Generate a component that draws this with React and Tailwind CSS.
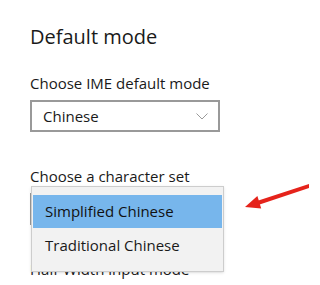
import React from 'react';

const font = { fontFamily: '"Open Sans", "Noto Sans", sans-serif' };

export default function App() {
  return (
    <div className="relative w-[309px] h-[285px] overflow-hidden bg-white text-[#1a1a1a]" style={font}>
      <div className="flex flex-col pl-[30px] pt-[24px]">
        <h2 className="text-[20px] leading-[26px] font-normal">Default mode</h2>
        <label className="mt-[23px] text-[15px] leading-[20px]">Choose IME default mode</label>
        <div className="mt-[7px] w-[190px] h-[32px] border-2 border-[#999999] flex items-center justify-between pl-[11px] pr-[10px] text-[15px]">
          <span>Chinese</span>
          <svg width="12" height="7" viewBox="0 0 12 7" fill="none" stroke="#9a9a9a" strokeWidth="1">
            <path d="M0.5 0.5 L6 6 L11.5 0.5" />
          </svg>
        </div>
        <label className="mt-[34px] text-[15px] leading-[20px]">Choose a character set</label>
        <div className="relative mt-[7px] w-[190px] h-[32px] border-2 border-[#999999]">
          <div className="absolute -left-[1px] -top-[9px] w-[193px] h-[86px] border border-[#cdcdcd] bg-[#f2f2f2] pt-[8px] px-[1px] flex flex-col shadow-sm z-10">
            <div className="h-[33px] bg-[#77b6ec] flex items-center pl-[12px] text-[15px] text-[#111]">Simplified Chinese</div>
            <div className="h-[34px] flex items-center pl-[12px] text-[15px]">Traditional Chinese</div>
          </div>
        </div>
        <label className="mt-[34px] text-[15px] leading-[20px]">Half-Width input mode</label>
      </div>
      <svg className="absolute left-[240px] top-[165px]" width="69" height="50" viewBox="0 0 69 50">
        <path d="M72 20 L16 38.5" stroke="#e5231b" strokeWidth="4" strokeLinecap="round" />
        <path d="M5 42 L17.4 31 L21.2 43.5 Z" fill="#e5231b" />
      </svg>
    </div>
  );
}
